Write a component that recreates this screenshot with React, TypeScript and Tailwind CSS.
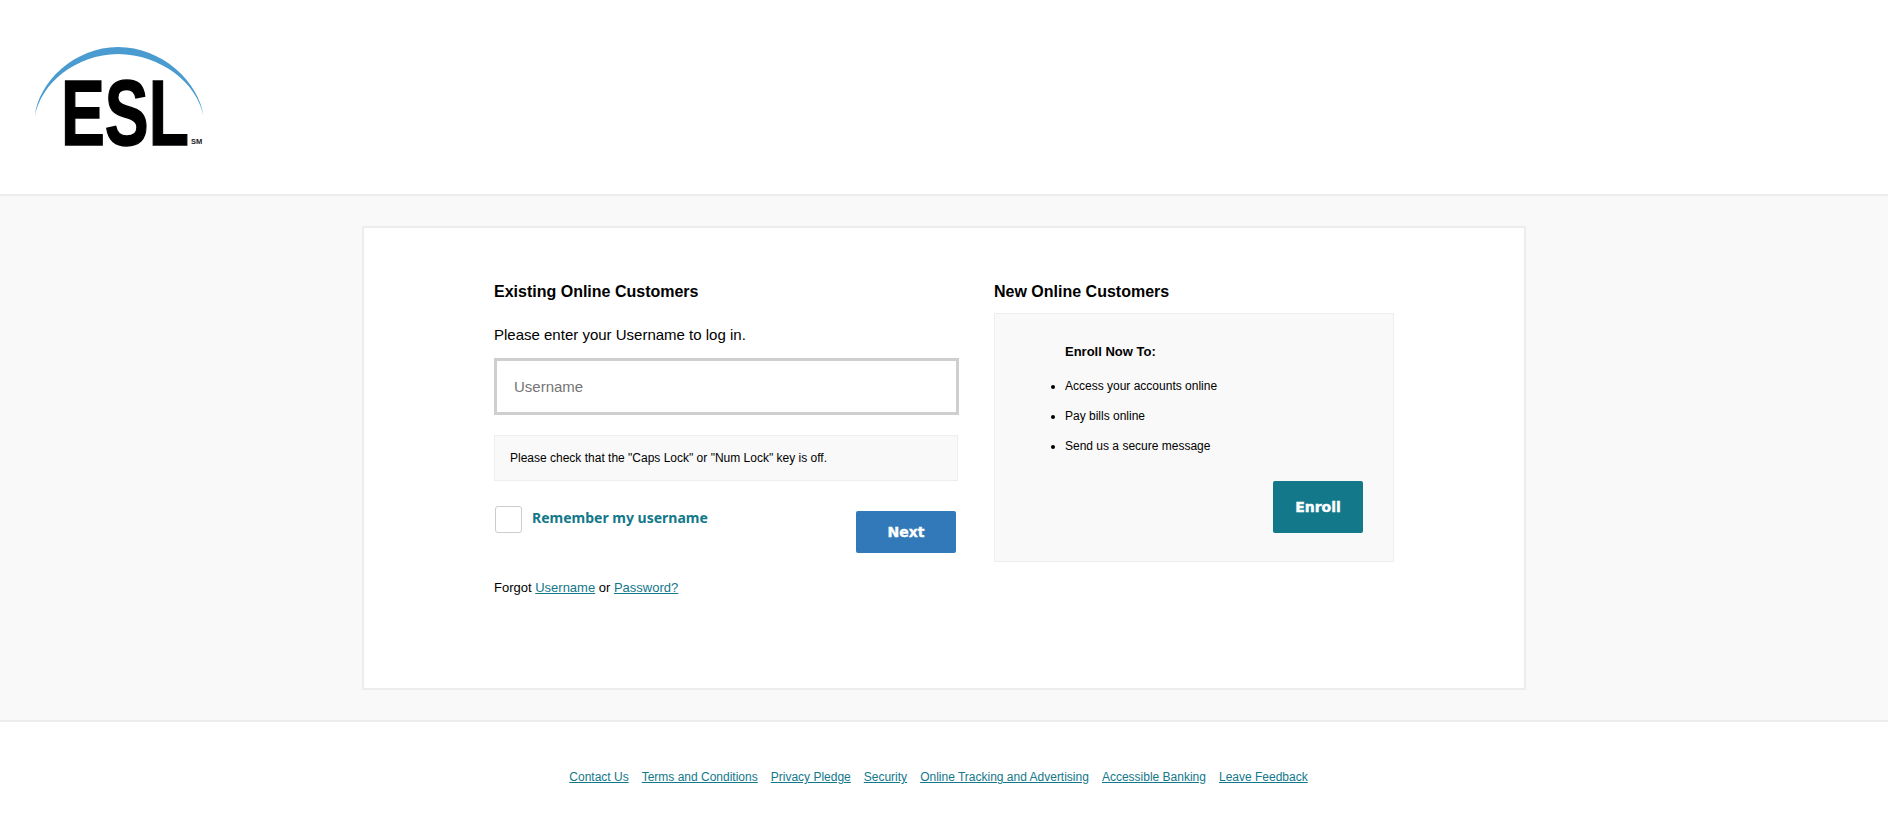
export default function App() {
  const links = ["Contact Us", "Terms and Conditions", "Privacy Pledge", "Security", "Online Tracking and Advertising", "Accessible Banking", "Leave Feedback"];
  return (
    <div className="min-h-[818px] bg-white text-black font-['Liberation_Sans',Arial,sans-serif]">
      <header className="h-[196px] border-b-2 border-[#ededed] bg-white">
        <svg width="240" height="194" viewBox="0 0 240 194" className="block">
          <path d="M35 116 C38 82 75 47 118 47 C162 47 199 82 203.500 116 C197 83 161 54.500 118 54 C76 54.500 41 83 35 116 Z" fill="#4a9bcf" />
          <text transform="translate(61 145) scale(0.715 1)" fontFamily="'Liberation Sans',sans-serif" fontWeight="700" fontSize="92" fill="#000" stroke="#000" strokeWidth="1.5">ESL</text>
          <text x="191" y="144" fontFamily="'Liberation Sans',sans-serif" fontWeight="700" fontSize="7.500" fill="#222">SM</text>
        </svg>
      </header>
      <main className="bg-[#f9f9f9] border-b-2 border-[#ededed] pt-[30px] pb-[30px]">
        <div className="mx-auto w-[1164px] h-[464px] bg-white border-2 border-[#ededed] pl-[130px] pt-[53px] flex gap-[35px]">
          <section className="w-[465px]">
            <h2 className="text-base font-bold leading-[22px]">Existing Online Customers</h2>
            <p className="text-[15px] leading-[22px] mt-[21px]">Please enter your Username to log in.</p>
            <input
              placeholder="Username"
              className="block mt-[12px] w-full h-[57px] border-[3px] border-[#cfcfcf] bg-white pl-[17px] text-[15px] outline-none placeholder:text-[#757575]"
            />
            <div className="mt-[20px] h-[46px] w-[464px] bg-[#f9f9f9] border border-[#eeeeee] pl-[15px] flex items-center text-xs">
              Please check that the "Caps Lock" or "Num Lock" key is off.
            </div>
            <div className="mt-[25px] flex items-start justify-between pl-[1px] pr-[3px]">
              <label className="flex items-start gap-[10px]">
                <span className="block w-[27px] h-[27px] rounded-[3px] border border-[#cccccc] bg-white" />
                <span className="font-['Noto_Sans',sans-serif] font-bold text-[14px] leading-[23px] text-[#12788a]">Remember my username</span>
              </label>
              <button className="mt-[5px] w-[100px] h-[42px] rounded-[2px] bg-[#3179b9] text-white font-['DejaVu_Sans',sans-serif] font-bold text-[14px] [-webkit-text-stroke:0.4px_white]">Next</button>
            </div>
            <p className="mt-[25px] text-[13px] leading-[20px]">
              Forgot <a href="#" className="underline text-[#12788a]">Username</a> or <a href="#" className="underline text-[#12788a]">Password?</a>
            </p>
          </section>
          <section className="w-[400px]">
            <h2 className="text-base font-bold leading-[22px]">New Online Customers</h2>
            <div className="mt-[10px] h-[249px] bg-[#f9f9f9] border border-[#eeeeee] pl-[70px] pt-[28px] pr-[30px]">
              <h3 className="text-[13px] font-bold leading-[20px]">Enroll Now To:</h3>
              <ul className="mt-[9px] list-disc text-[12px] leading-[30px]">
                <li>Access your accounts online</li>
                <li>Pay bills online</li>
                <li>Send us a secure message</li>
              </ul>
              <div className="mt-[20px] flex justify-end">
                <button className="w-[90px] h-[52px] rounded-[2px] bg-[#12788a] text-white font-['DejaVu_Sans',sans-serif] font-bold text-[14px] [-webkit-text-stroke:0.4px_white]">Enroll</button>
              </div>
            </div>
          </section>
        </div>
      </main>
      <footer className="bg-white pt-[46px] pr-[11px] flex justify-center gap-[13px] text-xs leading-[18px]">
        {links.map((l) => (
          <a key={l} href="#" className="underline text-[#12788a]">{l}</a>
        ))}
      </footer>
    </div>
  );
}
